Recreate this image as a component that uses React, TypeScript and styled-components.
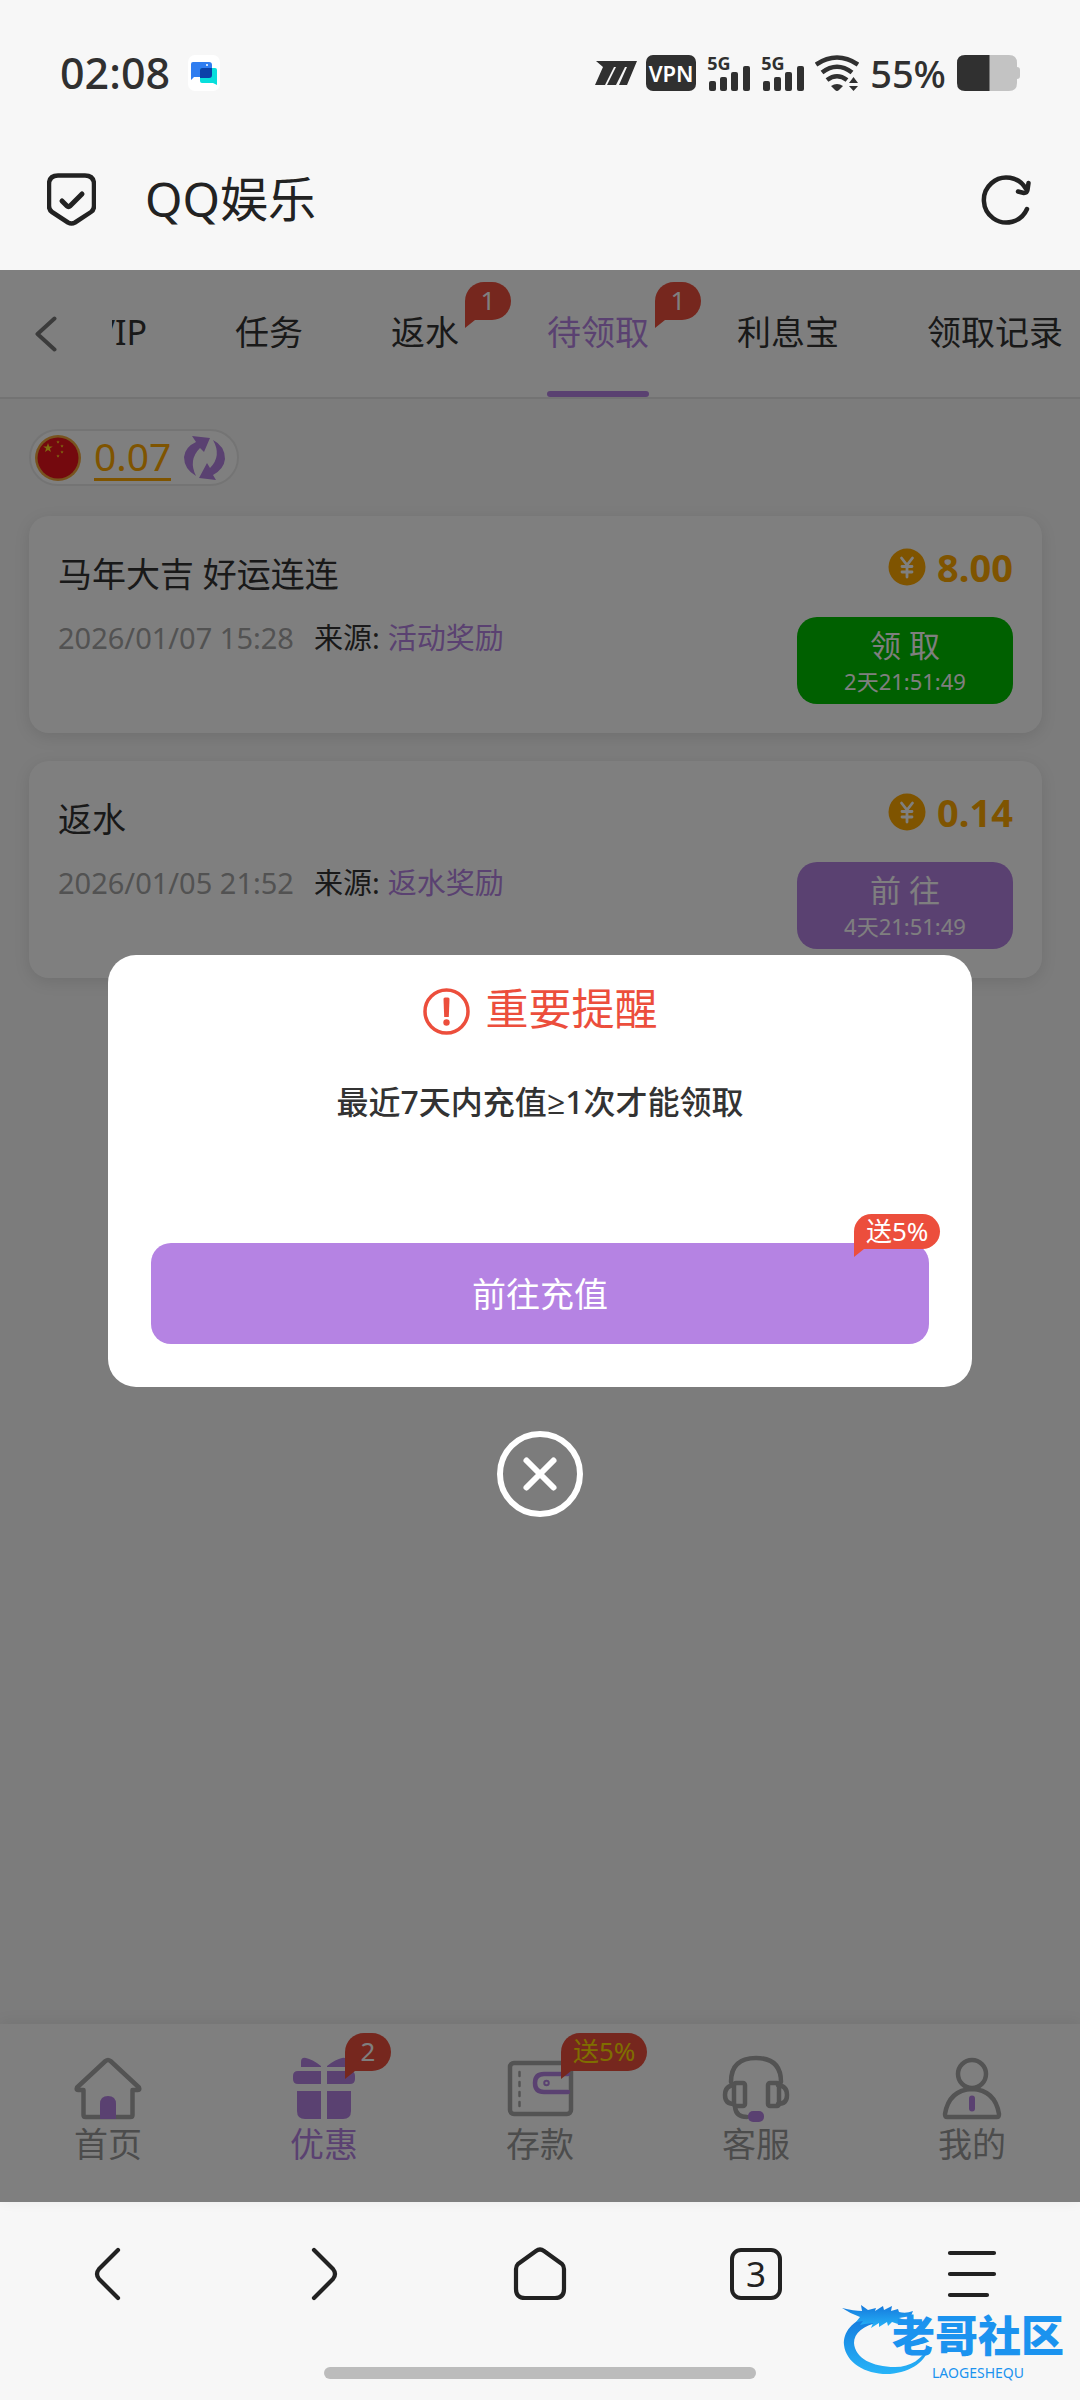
import React from "react";
import styled, { createGlobalStyle } from "styled-components";

const color = {
  ink: "#222222",
  status: "#303030",
  chrome: "#f7f7f7",
  page: "#f8f8f8",
  text: "#333333",
  muted: "#a4a4a4",
  icon: "#a6a6a6",
  purple: "#b583e3",
  gold: "#ffa800",
  green: "#00c000",
  red: "#ec4e3c",
};

const GlobalStyle = createGlobalStyle`
  *, *::before, *::after { box-sizing: border-box; }
  body {
    margin: 0;
    background: ${color.chrome};
    font-family: "Noto Sans", "Open Sans", "Noto Sans CJK SC", sans-serif;
    color: ${color.text};
  }
  button { font: inherit; color: inherit; border: 0; padding: 0; background: none; cursor: pointer; }
  a { color: inherit; text-decoration: none; }
  h1, h2, p, ul { margin: 0; padding: 0; font-weight: 400; }
  ul { list-style: none; }
  svg { display: block; flex: none; }
`;

const Screen = styled.div`
  display: flex;
  flex-direction: column;
  min-height: 100vh;
`;

/* ---------- system status bar ---------- */

const StatusBar = styled.header`
  display: flex;
  align-items: center;
  justify-content: space-between;
  height: 128px;
  padding: 18px 60px 0;
  color: ${color.status};
`;

const StatusGroup = styled.div<{ $gap: number }>`
  display: flex;
  align-items: center;
  gap: ${(p) => p.$gap}px;
`;

const Clock = styled.time`
  font-size: 43px;
  line-height: 48px;
  font-weight: 500;
`;

const Vpn = styled.span`
  display: flex;
  align-items: center;
  justify-content: center;
  width: 50px;
  height: 36px;
  border-radius: 7px;
  background: ${color.status};
  color: #ffffff;
  font-size: 22px;
  line-height: 36px;
  font-weight: 600;
`;

const SignalBox = styled.span`
  position: relative;
  display: block;
`;

const SignalLabel = styled.span`
  position: absolute;
  top: -1px;
  left: 0;
  font-size: 18px;
  line-height: 18px;
  font-weight: 700;
`;

const Percent = styled.span`
  font-size: 38px;
  line-height: 40px;
  font-weight: 500;
`;

/* ---------- browser address bar ---------- */

const AddressBar = styled.div`
  display: flex;
  align-items: center;
  height: 142px;
  padding: 0 49px 0 47px;
  color: ${color.ink};
`;

const SiteTitle = styled.h1`
  flex: 1;
  margin-left: 49px;
  font-size: 48px;
  line-height: 56px;
  font-weight: 400;
`;

const IconButton = styled.button`
  display: flex;
  align-items: center;
  justify-content: center;
`;

/* ---------- web page ---------- */

const WebPage = styled.main`
  position: relative;
  flex: 1;
  display: flex;
  flex-direction: column;
  background: ${color.page};
`;

const TabBar = styled.nav`
  display: flex;
  height: 129px;
  background: #ffffff;
  border-bottom: 2px solid #e6e6e6;
`;

const BackButton = styled(IconButton)`
  width: 112px;
  padding-right: 20px;
  color: #777777;
`;

const TabStrip = styled.div`
  flex: 1;
  min-width: 0;
  display: flex;
  justify-content: flex-end;
  gap: 88px;
  padding-right: 17px;
  overflow: hidden;
`;

const Tab = styled.a<{ $active?: boolean }>`
  position: relative;
  display: flex;
  align-items: center;
  flex: none;
  padding-bottom: 3px;
  font-size: 34px;
  line-height: 40px;
  color: ${(p) => (p.$active ? color.purple : color.text)};

  &::after {
    content: "";
    display: ${(p) => (p.$active ? "block" : "none")};
    position: absolute;
    left: 0;
    right: 0;
    bottom: 0;
    height: 6px;
    border-radius: 3px;
    background: ${color.purple};
  }
`;

const Badge = styled.span<{ $top: string; $left: string; $color?: string; $small?: boolean }>`
  position: absolute;
  top: ${(p) => p.$top};
  left: ${(p) => p.$left};
  display: flex;
  align-items: center;
  justify-content: center;
  min-width: 46px;
  height: ${(p) => (p.$small ? 35 : 38)}px;
  padding: 0 12px 2px;
  border-radius: 19px 19px 19px 0;
  background: ${color.red};
  color: ${(p) => p.$color || "#ffffff"};
  font-size: 26px;
  line-height: 34px;
  white-space: nowrap;

  &::after {
    content: "";
    position: absolute;
    left: 0;
    top: 100%;
    width: 10px;
    height: 8px;
    background: ${color.red};
    clip-path: polygon(0 0, 100% 0, 0 100%);
  }
`;

const Content = styled.section`
  flex: 1;
  display: flex;
  flex-direction: column;
  align-items: flex-start;
  padding: 30px 38px 30px 29px;
`;

const Balance = styled.div`
  display: flex;
  align-items: center;
  height: 57px;
  padding: 0 12px 0 3px;
  border: 2px solid #e9e9e9;
  border-radius: 29px;
  background: #ffffff;
`;

const BalanceValue = styled.a`
  margin: 0 13px 0 12px;
  border-bottom: 3px solid ${color.gold};
  font-size: 39px;
  line-height: 44px;
  color: ${color.gold};
`;

const RewardList = styled.ul`
  align-self: stretch;
  display: flex;
  flex-direction: column;
  gap: 28px;
  margin-top: 30px;
`;

const RewardCard = styled.li`
  display: flex;
  justify-content: space-between;
  height: 217px;
  padding: 29px;
  border-radius: 20px;
  background: #ffffff;
  box-shadow: 0 4px 16px rgba(0, 0, 0, 0.1);
`;

const RewardInfo = styled.div`
  display: flex;
  flex-direction: column;
  gap: 24px;
  padding-top: 7px;
`;

const RewardTitle = styled.h2`
  font-size: 34px;
  line-height: 44px;
`;

const RewardMeta = styled.p`
  display: flex;
  gap: 8px;
  font-size: 29px;
  line-height: 36px;
`;

const RewardDate = styled.time`
  margin-right: 12px;
  color: ${color.muted};
`;

const RewardSource = styled.span`
  color: ${color.purple};
`;

const RewardSide = styled.div`
  display: flex;
  flex-direction: column;
  align-items: flex-end;
  justify-content: space-between;
`;

const Amount = styled.div`
  display: flex;
  align-items: center;
  gap: 11px;
  font-size: 38px;
  line-height: 44px;
  font-weight: 700;
  color: ${color.gold};
`;

const ActionButton = styled.button<{ $tone: string }>`
  display: flex;
  flex-direction: column;
  align-items: center;
  justify-content: center;
  width: 216px;
  height: 87px;
  border-radius: 20px;
  background: ${(p) => p.$tone};
  color: #ffffff;
`;

const ActionLabel = styled.span`
  font-size: 31px;
  line-height: 40px;
`;

const ActionTime = styled.span`
  font-size: 22px;
  line-height: 32px;
`;

/* ---------- page footer navigation ---------- */

const AppNav = styled.nav`
  display: grid;
  grid-template-columns: repeat(5, 1fr);
  height: 178px;
  background: #ffffff;
  box-shadow: 0 -2px 14px rgba(0, 0, 0, 0.07);
`;

const AppNavItem = styled.a<{ $active?: boolean }>`
  position: relative;
  display: flex;
  flex-direction: column;
  align-items: center;
  padding-top: 30px;
  font-size: 34px;
  line-height: 44px;
  color: ${(p) => (p.$active ? color.purple : "#999999")};
`;

/* ---------- reminder dialog ---------- */

const Overlay = styled.div`
  position: absolute;
  inset: 0;
  display: flex;
  flex-direction: column;
  align-items: center;
  justify-content: center;
  gap: 44px;
  background: rgba(0, 0, 0, 0.5);
`;

const Dialog = styled.div`
  display: flex;
  flex-direction: column;
  align-items: center;
  width: 80%;
  padding: 26px 43px 43px;
  border-radius: 28px;
  background: #ffffff;
`;

const DialogTitle = styled.h2`
  display: flex;
  align-items: flex-end;
  gap: 16px;
  font-size: 43px;
  line-height: 56px;
  color: ${color.red};

  svg {
    margin-bottom: 2px;
  }
`;

const DialogText = styled.p`
  margin-top: 44px;
  min-height: 162px;
  font-size: 32px;
  line-height: 42px;
  font-weight: 500;
`;

const DialogButton = styled.button`
  position: relative;
  align-self: stretch;
  height: 101px;
  border-radius: 20px;
  background: ${color.purple};
  color: #ffffff;
  font-size: 34px;
  line-height: 44px;
`;

/* ---------- browser toolbar ---------- */

const BrowserBar = styled.footer`
  position: relative;
  display: flex;
  flex-direction: column;
  align-items: center;
  justify-content: space-between;
  height: 198px;
  padding-bottom: 21px;
  color: ${color.ink};
`;

const BrowserTools = styled.div`
  align-self: stretch;
  display: grid;
  grid-template-columns: repeat(5, 1fr);
  height: 144px;
`;

const TabCount = styled.span`
  display: flex;
  align-items: center;
  justify-content: center;
  width: 52px;
  height: 52px;
  border: 4px solid ${color.ink};
  border-radius: 11px;
  font-size: 35px;
  line-height: 40px;
`;

const HomeIndicator = styled.div`
  width: 40%;
  height: 12px;
  border-radius: 6px;
  background: #bcbcbc;
`;

const Watermark = styled.div`
  position: absolute;
  right: 16px;
  bottom: 20px;
  display: flex;
`;

const WatermarkText = styled.div`
  display: flex;
  flex-direction: column;
  align-items: center;
  margin-left: -44px;
  padding-top: 2px;
  color: #1b93ef;
`;

const WatermarkName = styled.span`
  font-size: 43px;
  line-height: 60px;
  font-weight: 900;
`;

const WatermarkLatin = styled.span`
  font-size: 14px;
  line-height: 14px;
`;

/* ---------- icons ---------- */

const ChatIcon = () => (
  <svg width="32" height="36" viewBox="0 0 32 36" aria-hidden="true">
    <rect width="32" height="36" rx="7" fill="#ffffff" />
    <path d="M5 7h16q3 0 3 3v12H6l-3 3V9q0-2 2-2z" fill="#2f7df0" />
    <path d="M14 13h13q2 0 2 2v15l-4-2H14q-2 0-2-2V15q0-2 2-2z" fill="#08dfdc" />
    <path d="M14 13h10v7q0 3-3 3h-9v-8q0-2 2-2z" fill="#0b41a8" />
    <circle cx="19" cy="10" r="1" fill="#ffffff" />
  </svg>
);

const CarrierIcon = () => (
  <svg width="42" height="24" viewBox="0 0 42 24" aria-hidden="true">
    <path
      d="M1 0h41l-10 24h-8l8-18h-2l-9 18h-9l9-18h-2l-9 18H0L8 6Z"
      fill={color.status}
    />
  </svg>
);

const Signal = () => (
  <SignalBox>
    <SignalLabel>5G</SignalLabel>
    <svg width="43" height="36" viewBox="0 0 43 36" fill={color.status} aria-hidden="true">
      <rect x="2" y="26" width="7" height="10" rx="2" />
      <rect x="13" y="22" width="7" height="14" rx="2" />
      <rect x="24" y="17" width="7" height="19" rx="2" />
      <rect x="36" y="11" width="7" height="25" rx="2" />
    </svg>
  </SignalBox>
);

const WifiIcon = () => (
  <svg width="44" height="36" viewBox="0 0 44 36" aria-hidden="true">
    <g fill="none" stroke={color.status} strokeWidth="4.6">
      <path d="M1 9.5Q22-4.500 43 9.500" />
      <path d="M7 17.500Q22 6 37 17.500" />
      <path d="M12 25Q22 17.500 32 25" />
    </g>
    <path d="M16 31q6-4 12 0l-4 4q-2 2-4 0zM34 28l4.500-6 4.500 6zM34 31h9l-4.500 5z" fill={color.status} />
  </svg>
);

const BatteryIcon = () => (
  <svg width="63" height="36" viewBox="0 0 63 36" aria-hidden="true">
    <path d="M32 0h20q8 0 8 8v4q3 0 3 3v6q0 3-3 3v4q0 8-8 8H32z" fill="#c3c3c3" />
    <path d="M32.500 0v36H8q-8 0-8-8V8q0-8 8-8z" fill={color.status} />
  </svg>
);

const ShieldIcon = () => (
  <svg width="49" height="53" viewBox="0 0 49 53" fill="none" stroke="currentColor" strokeLinecap="round" strokeLinejoin="round" aria-hidden="true">
    <path d="M11 2.500h27q9 0 9 9V33q0 4-3 6L28 49.500q-3.500 2-7 0L5 39q-3-2-3-6V11.500q0-9 9-9z" strokeWidth="4.500" />
    <path d="M15 28l5 5q1.500 1.500 3 0L35 21" strokeWidth="5" />
  </svg>
);

const ReloadIcon = () => (
  <svg width="50" height="51" viewBox="0 0 50 51" fill="none" stroke="currentColor" strokeWidth="4.500" strokeLinecap="round" strokeLinejoin="round" aria-hidden="true">
    <path d="M46 35A22.500 22.500 0 1 1 45 15" />
    <path d="M47.500 9l-1 7q-.5 3-3.500 3L37 17.500" />
  </svg>
);

const BackIcon = () => (
  <svg width="22" height="36" viewBox="0 0 22 36" fill="none" stroke="currentColor" strokeWidth="4" strokeLinecap="round" strokeLinejoin="round" aria-hidden="true">
    <path d="M19.500 2.500L2.500 18l17 15.500" />
  </svg>
);

const STAR = "M0-5L1.200-1.600 4.800-1.500 1.900.6 3 4 0 2-3 4-1.900.6-4.800-1.500-1.200-1.600z";

const FlagIcon = () => (
  <svg width="48" height="50" viewBox="0 0 48 50" aria-hidden="true">
    <circle cx="24" cy="25" r="23" fill="#f0a63c" />
    <circle cx="24" cy="25" r="20.500" fill="#e8121c" />
    <g fill="#ffd91f">
      <path d={STAR} transform="translate(14 15)" />
      <path d={STAR} transform="translate(24 9) scale(.35)" />
      <path d={STAR} transform="translate(28 13) scale(.35)" />
      <path d={STAR} transform="translate(28 19) scale(.35)" />
      <path d={STAR} transform="translate(24 23) scale(.35)" />
    </g>
  </svg>
);

const SwapIcon = () => (
  <svg width="41" height="44" viewBox="0 0 41 44" fill={color.purple} aria-hidden="true">
    <path d="M8 0l18 2-6 14-4-4Q4 24 12 40 0 33 0 21 1 11 12 6z" />
    <path d="M32 44l-17-2 8-15 3 5q12-12 3-28 12 6 12 19-1 10-12 16z" />
  </svg>
);

const CoinIcon = () => (
  <svg width="38" height="38" viewBox="0 0 38 38" aria-hidden="true">
    <circle cx="19" cy="19" r="18.500" fill={color.gold} />
    <path d="M13.500 10l5.500 7 5.500-7M19 17v12M14 18.500h10M14 24h10" fill="none" stroke="#ffffff" strokeWidth="2.800" strokeLinecap="round" />
  </svg>
);

const AlertIcon = () => (
  <svg width="47" height="47" viewBox="0 0 47 47" aria-hidden="true">
    <circle cx="23.500" cy="23.500" r="21.500" fill="none" stroke={color.red} strokeWidth="3.500" />
    <path d="M20.500 11q0-1.500 1.500-1.500h3q1.500 0 1.500 1.500l-.7 18h-4.600z" fill={color.red} />
    <circle cx="23.500" cy="34.500" r="3.200" fill={color.red} />
  </svg>
);

const CloseIcon = () => (
  <svg width="86" height="86" viewBox="0 0 86 86" fill="none" stroke="#ffffff" strokeWidth="6" strokeLinecap="round" aria-hidden="true">
    <circle cx="43" cy="43" r="40" />
    <path d="M29.500 29.500l27 27M56.500 29.500l-27 27" />
  </svg>
);

const NavSvg = ({ children }: { children: React.ReactNode }) => (
  <svg width="70" height="68" viewBox="0 0 70 68" fill="none" stroke={color.icon} strokeWidth="4.500" strokeLinecap="round" strokeLinejoin="round" aria-hidden="true">
    {children}
  </svg>
);

const HouseIcon = () => (
  <NavSvg>
    <path d="M32.500 7q2.500-2 5 0L66 33.500q1 2.500-1 2.500h-5.500v25q0 2-2 2h-45q-2 0-2-2V36H5q-2 0-1-2.500z" />
    <path d="M27 65V50q0-8 8-8t8 8v15z" fill={color.purple} stroke="none" />
  </NavSvg>
);

const GiftIcon = () => (
  <NavSvg>
    <g fill={color.purple} stroke="none">
      <path d="M12 13V8q0-5 5-4 6 1 15 8v1z" />
      <path d="M58 13V8q0-5-5-4-6 1-15 8v1z" />
      <path d="M4 22q0-5 5-5h23v13H9q-5 0-5-5z" />
      <path d="M38 17h23q5 0 5 5v3q0 5-5 5H38z" />
      <path d="M8 37h24v28H16q-8 0-8-8z" />
      <path d="M38 37h24v20q0 8-8 8H38z" />
    </g>
  </NavSvg>
);

const WalletIcon = () => (
  <NavSvg>
    <rect x="5" y="9" width="61" height="51" rx="4" />
    <path d="M14.500 18v38" strokeWidth="2.500" strokeDasharray="4 6" />
    <g stroke={color.purple}>
      <path d="M63 20H39q-9 0-9 9t9 9h24" />
      <circle cx="41.500" cy="29" r="1" />
    </g>
  </NavSvg>
);

const HeadsetIcon = () => (
  <NavSvg>
    <path d="M10 28Q10 4 35 4t25 24" />
    <rect x="13" y="29" width="11" height="23" rx="2" />
    <rect x="47" y="29" width="11" height="23" rx="2" />
    <path d="M13 31q-9 1-9 10t9 9M57 31q9 1 9 10t-9 9M14 53q1 10 12 10" />
    <rect x="27" y="57" width="16" height="11" rx="5" fill={color.purple} stroke="none" />
  </NavSvg>
);

const PersonIcon = () => (
  <NavSvg>
    <circle cx="35" cy="20" r="14" />
    <path d="M10 63Q8 63 8 60 12 36 35 35q23 1 27 25 0 3-2 3z" />
    <path d="M35 44.500v10" stroke={color.purple} strokeWidth="6" />
  </NavSvg>
);

const ToolSvg = ({ children }: { children: React.ReactNode }) => (
  <svg width="54" height="54" viewBox="0 0 54 54" fill="none" stroke="currentColor" strokeWidth="4.200" strokeLinecap="round" strokeLinejoin="round" aria-hidden="true">
    {children}
  </svg>
);

const Dragon = () => (
  <svg width="94" height="72" viewBox="0 0 94 72" aria-hidden="true">
    <defs>
      <linearGradient id="dragonFill" x1="0" y1="0" x2="0" y2="1">
        <stop offset="0" stopColor="#1478dc" />
        <stop offset="1" stopColor="#27b4f8" />
      </linearGradient>
    </defs>
    <g fill="url(#dragonFill)">
      <path d="M28 11C10 17 1 28 2 41c2 18 22 30 46 29 21-2 37-13 39-28-7 13-18 21-34 21-23 0-40-9-41-24 0-10 9-17 25-21z" />
      <path d="M0 4q12 3 20 3l-1-6 7 5 8-2-1 3 8-5 1 4 8-4-1 5 7-2 1 3q7 2 14-1l-2 5-12 2q7 3 12 2l-1 3q-9 3-18-1l-4 4-1-4-8 5v-4l-8 5 2-5-8 1-5 1 3-4-7 1 4-5Q9 10 0 4z" />
    </g>
  </svg>
);

/* ---------- data ---------- */

const tabs = [
  { label: "VIP" },
  { label: "任务" },
  { label: "返水", badge: "1" },
  { label: "待领取", badge: "1", active: true },
  { label: "利息宝" },
  { label: "领取记录" },
];

const rewards = [
  { title: "马年大吉 好运连连", date: "2026/01/07 15:28", source: "活动奖励", amount: "8.00", action: "领 取", left: "2天21:51:49", tone: color.green },
  { title: "返水", date: "2026/01/05 21:52", source: "返水奖励", amount: "0.14", action: "前 往", left: "4天21:51:49", tone: color.purple },
];

const navItems = [
  { label: "首页", Icon: HouseIcon },
  { label: "优惠", Icon: GiftIcon, badge: "2", active: true },
  { label: "存款", Icon: WalletIcon, badge: "送5%", badgeColor: "#ffdc00" },
  { label: "客服", Icon: HeadsetIcon },
  { label: "我的", Icon: PersonIcon },
];

export default function App() {
  return (
    <Screen>
      <GlobalStyle />

      <StatusBar>
        <StatusGroup $gap={18}>
          <Clock>02:08</Clock>
          <ChatIcon />
        </StatusGroup>
        <StatusGroup $gap={11}>
          <StatusGroup $gap={9}>
            <CarrierIcon />
            <Vpn>VPN</Vpn>
          </StatusGroup>
          <Signal />
          <Signal />
          <WifiIcon />
          <Percent>55%</Percent>
          <BatteryIcon />
        </StatusGroup>
      </StatusBar>

      <AddressBar>
        <ShieldIcon />
        <SiteTitle>QQ娱乐</SiteTitle>
        <IconButton aria-label="刷新">
          <ReloadIcon />
        </IconButton>
      </AddressBar>

      <WebPage>
        <TabBar>
          <BackButton aria-label="返回">
            <BackIcon />
          </BackButton>
          <TabStrip>
            {tabs.map((t) => (
              <Tab key={t.label} href="#" $active={t.active}>
                {t.label}
                {t.badge && (
                  <Badge $top="12px" $left="calc(100% + 6px)">
                    {t.badge}
                  </Badge>
                )}
              </Tab>
            ))}
          </TabStrip>
        </TabBar>

        <Content>
          <Balance>
            <FlagIcon />
            <BalanceValue href="#">0.07</BalanceValue>
            <IconButton aria-label="刷新余额">
              <SwapIcon />
            </IconButton>
          </Balance>

          <RewardList>
            {rewards.map((r) => (
              <RewardCard key={r.title}>
                <RewardInfo>
                  <RewardTitle>{r.title}</RewardTitle>
                  <RewardMeta>
                    <RewardDate>{r.date}</RewardDate>
                    <span>来源:</span>
                    <RewardSource>{r.source}</RewardSource>
                  </RewardMeta>
                </RewardInfo>
                <RewardSide>
                  <Amount>
                    <CoinIcon />
                    {r.amount}
                  </Amount>
                  <ActionButton $tone={r.tone}>
                    <ActionLabel>{r.action}</ActionLabel>
                    <ActionTime>{r.left}</ActionTime>
                  </ActionButton>
                </RewardSide>
              </RewardCard>
            ))}
          </RewardList>
        </Content>

        <AppNav>
          {navItems.map(({ label, Icon, badge, badgeColor, active }) => (
            <AppNavItem key={label} href="#" $active={active}>
              <Icon />
              {label}
              {badge && (
                <Badge $top="9px" $left="calc(50% + 21px)" $color={badgeColor}>
                  {badge}
                </Badge>
              )}
            </AppNavItem>
          ))}
        </AppNav>

        <Overlay>
          <Dialog role="dialog" aria-labelledby="reminder-title">
            <DialogTitle id="reminder-title">
              <AlertIcon />
              重要提醒
            </DialogTitle>
            <DialogText>最近7天内充值≥1次才能领取</DialogText>
            <DialogButton>
              前往充值
              <Badge $top="-29px" $left="calc(100% - 75px)" $small>
                送5%
              </Badge>
            </DialogButton>
          </Dialog>
          <IconButton aria-label="关闭">
            <CloseIcon />
          </IconButton>
        </Overlay>
      </WebPage>

      <BrowserBar>
        <BrowserTools>
          <IconButton aria-label="后退">
            <ToolSvg>
              <path d="M37 3L18 22q-4 5 0 10l19 19" />
            </ToolSvg>
          </IconButton>
          <IconButton aria-label="前进">
            <ToolSvg>
              <path d="M17 3l19 19q4 5 0 10L17 51" />
            </ToolSvg>
          </IconButton>
          <IconButton aria-label="主页">
            <ToolSvg>
              <path d="M23 4q4-3 8 0l18 13q2 2 2 5v20q0 9-9 9H12q-9 0-9-9V22q0-3 2-5z" />
            </ToolSvg>
          </IconButton>
          <IconButton aria-label="标签页">
            <TabCount>3</TabCount>
          </IconButton>
          <IconButton aria-label="菜单">
            <ToolSvg>
              <path d="M5 6h44M5 27h44M5 48h37" />
            </ToolSvg>
          </IconButton>
        </BrowserTools>
        <HomeIndicator />
        <Watermark>
          <Dragon />
          <WatermarkText>
            <WatermarkName>老哥社区</WatermarkName>
            <WatermarkLatin>LAOGESHEQU</WatermarkLatin>
          </WatermarkText>
        </Watermark>
      </BrowserBar>
    </Screen>
  );
}
